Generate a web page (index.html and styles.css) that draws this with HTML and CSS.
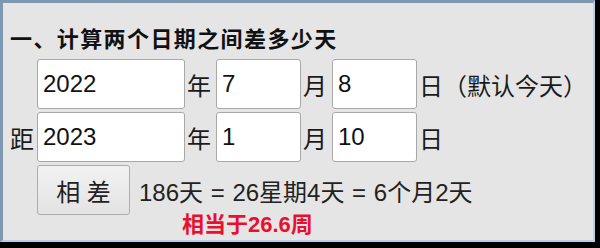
FILE: index.html
```html
<!DOCTYPE html>
<html lang="zh-CN">
<head>
  <meta charset="UTF-8" />
  <title>日期差计算</title>
  <link rel="stylesheet" href="styles.css">
</head>
<body>

<div class="frame">
  <h2 class="title">一、计算两个日期之间差多少天</h2>

  <form class="calc">
    <div class="row">
      <span class="lead"></span>
      <input class="year" type="text" value="2022">
      <span class="unit">年</span>
      <input class="small" type="text" value="7">
      <span class="unit">月</span>
      <input class="small" type="text" value="8">
      <span class="unit last">日（默认今天）</span>
    </div>

    <div class="row">
      <span class="lead">距</span>
      <input class="year" type="text" value="2023">
      <span class="unit">年</span>
      <input class="small" type="text" value="1">
      <span class="unit">月</span>
      <input class="small" type="text" value="10">
      <span class="unit last">日</span>
    </div>

    <div class="row result-row">
      <span class="lead"></span>
      <button type="button">相 差</button>
      <span class="result">186天 = 26星期4天 = 6个月2天</span>
    </div>

    <div class="weeks">相当于26.6周</div>
  </form>
</div>

</body>
</html>
```

FILE: styles.css
```css
body {
  margin: 0;
  background-color: #000;
  font-family: "Liberation Sans", "Noto Sans CJK SC", sans-serif;
  color: #1a1a1a;
}

.frame {
  width: 595px;
  height: 242px;
  box-sizing: border-box;
  background-color: #e5e5e5;
  border-top: 3px solid #7f98b2;
  border-left: 3px solid #7f98b2;
  border-right: 2px solid #b7d0e8;
  border-bottom: 2px solid #b7d0e8;
  padding: 24px 0 0 7px;
  overflow: hidden;
}

.title {
  margin: 0;
  font-size: 22px;
  line-height: 26px;
  letter-spacing: 1.4px;
  font-weight: bold;
  color: #111;
  white-space: nowrap;
}

.calc {
  margin-top: 6px;
}

.row {
  display: flex;
  align-items: center;
  margin-bottom: 3px;
  font-size: 24px;
  white-space: nowrap;
}

.lead {
  width: 27px;
  flex: none;
}

.row input {
  height: 50px;
  box-sizing: border-box;
  border: 1px solid #a8a8a8;
  border-radius: 3px;
  background-color: #fff;
  font-family: "Liberation Sans", "Noto Sans CJK SC", sans-serif;
  font-size: 24px;
  color: #111;
  padding: 0 0 0 5px;
  margin: 0;
  outline: none;
}

.row .year {
  width: 148px;
}

.row .small {
  width: 85px;
}

.unit {
  margin: 0 5px 0 2px;
}

.unit.last {
  margin-right: 0;
}

.result-row {
  margin-top: 2px;
}

.result-row button {
  width: 93px;
  height: 50px;
  box-sizing: border-box;
  border: 1px solid #adadad;
  border-radius: 3px;
  background: linear-gradient(#f2f2f2, #e3e3e3);
  font-family: "Liberation Sans", "Noto Sans CJK SC", sans-serif;
  font-size: 24px;
  color: #222;
  padding: 0;
}

.result {
  margin-left: 9px;
  color: #222;
  word-spacing: 1px;
}

.weeks {
  margin: -5px 0 0 172px;
  font-size: 22px;
  line-height: 24px;
  font-weight: bold;
  color: #e8102e;
}
```
